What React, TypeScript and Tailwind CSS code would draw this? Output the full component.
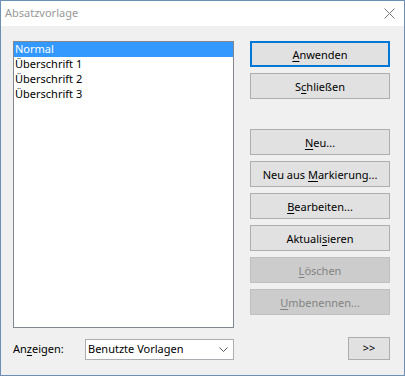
const font = { fontFamily: '"Noto Sans", "Open Sans", sans-serif' };

type Btn = { pre: string; hot: string; post: string; disabled?: boolean; primary?: boolean };

const topButtons: Btn[] = [
  { pre: "", hot: "A", post: "nwenden", primary: true },
  { pre: "S", hot: "c", post: "hließen" },
];

const editButtons: Btn[] = [
  { pre: "", hot: "N", post: "eu..." },
  { pre: "Neu aus ", hot: "M", post: "arkierung..." },
  { pre: "", hot: "B", post: "earbeiten..." },
  { pre: "Aktuali", hot: "s", post: "ieren" },
  { pre: "", hot: "L", post: "öschen", disabled: true },
  { pre: "", hot: "U", post: "mbenennen...", disabled: true },
];

const styles = ["Normal", "Überschrift 1", "Überschrift 2", "Überschrift 3"];

function DialogButton({ pre, hot, post, disabled, primary }: Btn) {
  const base = "h-[26px] w-[140px] flex items-center justify-center text-[11px] leading-none";
  const look = disabled
    ? "bg-[#cccccc] border border-[#bfbfbf] text-[#838383]"
    : primary
      ? "bg-[#e1e1e1] border-2 border-[#0078d7] text-black"
      : "bg-[#e1e1e1] border border-[#adadad] text-black";
  return (
    <div className={`${base} ${look}`}>
      <span>
        {pre}
        <span className="underline underline-offset-2">{hot}</span>
        {post}
      </span>
    </div>
  );
}

export default function App() {
  return (
    <div
      className="w-[405px] h-[376px] flex flex-col border border-[#6d8fb3] bg-[#f0f0f0] text-black"
      style={font}
    >
      <div className="h-[25px] bg-white flex items-center justify-between pl-[4px] pr-[9px]">
        <span className="text-[11px] text-[#999999]">Absatzvorlage</span>
        <svg width="11" height="11" viewBox="0 0 11 11">
          <path d="M0.5 0.5 L10.5 10.5 M10.5 0.5 L0.5 10.5" stroke="#7a7a7a" strokeWidth="1" />
        </svg>
      </div>

      <div className="flex-1 flex pl-[12px] pt-[15px]">
        <div className="w-[221px] flex flex-col">
          <div className="h-[287px] bg-white border border-[#828790] flex flex-col">
            {styles.map((s, i) => (
              <div
                key={s}
                className={`h-[15px] pl-[1px] flex items-center text-[11px] ${
                  i === 0 ? "bg-[#3399ff] text-white" : "text-black"
                }`}
              >
                {s}
              </div>
            ))}
          </div>
          <div className="mt-[11px] flex items-center">
            <span className="w-[72px] text-[11px]">
              An<span className="underline underline-offset-2">z</span>eigen:
            </span>
            <div className="w-[149px] h-[21px] bg-white border border-[#abadb3] flex items-center justify-between pl-[2px] pr-[5px]">
              <span className="text-[11px]">Benutzte Vorlagen</span>
              <svg width="9" height="5" viewBox="0 0 9 5">
                <path d="M0.5 0.5 L4.5 4.5 L8.5 0.5" fill="none" stroke="#555555" strokeWidth="1" />
              </svg>
            </div>
          </div>
        </div>

        <div className="ml-[16px] w-[140px] flex flex-col">
          <div className="flex flex-col gap-[6px]">
            {topButtons.map((b) => (
              <DialogButton key={b.pre + b.hot} {...b} />
            ))}
          </div>
          <div className="mt-[30px] flex flex-col gap-[6px]">
            {editButtons.map((b) => (
              <DialogButton key={b.pre + b.hot} {...b} />
            ))}
          </div>
          <div className="mt-[22px] flex justify-end">
            <div className="w-[42px] h-[23px] bg-[#e1e1e1] border border-[#adadad] flex items-center justify-center text-[11px]">
              &gt;&gt;
            </div>
          </div>
        </div>
      </div>
    </div>
  );
}
